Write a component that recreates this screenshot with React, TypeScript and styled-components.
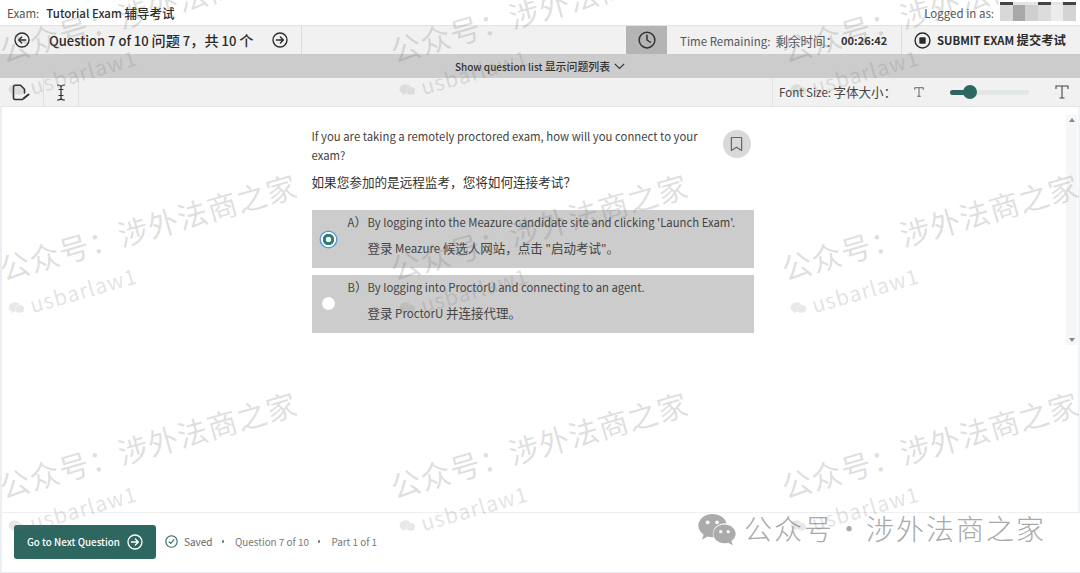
import React from 'react'
import styled, { createGlobalStyle } from 'styled-components'

const FONT = `"Noto Sans CJK SC", "Noto Sans", sans-serif`

const GlobalStyle = createGlobalStyle`
  html, body {
    margin: 0;
    padding: 0;
    background: #fff;
    font-family: ${FONT};
  }
  * { box-sizing: border-box; }
`

const WeChat = ({ size, color, eyes }: { size: number; color: string; eyes?: boolean }) => (
  <svg width={size} height={size * 0.84} viewBox="0 0 42 36">
    <path
      fill={color}
      d="M16 1C7.700 1 1 6.600 1 13.500c0 4 2.200 7.400 5.700 9.700L5 28.500l6.200-3.200c1.500.4 3 .7 4.800.7h1.200c-.5-1.200-.7-2.400-.7-3.700 0-6.400 6.100-11.300 13.600-11.300h1.100C29.800 5.100 23.500 1 16 1z"
    />
    <path
      fill={color}
      d="M41 22.300c0-5.600-5.500-10.100-12-10.100s-12 4.500-12 10.100 5.500 10.100 12 10.100c1.300 0 2.700-.2 3.900-.6l4.900 2.700-1.300-4.400c2.700-1.900 4.500-4.700 4.500-7.800z"
    />
    {eyes && (
      <>
        <circle cx="11" cy="10" r="2" fill="#fff" />
        <circle cx="21" cy="10" r="2" fill="#fff" />
        <circle cx="25" cy="20" r="1.700" fill="#fff" />
        <circle cx="33" cy="20" r="1.700" fill="#fff" />
      </>
    )}
  </svg>
)

const CircleArrow = ({ dir, size, color }: { dir: 'left' | 'right'; size: number; color: string }) => (
  <svg width={size} height={size} viewBox="0 0 24 24" fill="none" stroke={color} strokeWidth="2" strokeLinecap="round" strokeLinejoin="round">
    <circle cx="12" cy="12" r="10.500" />
    {dir === 'left' ? <path d="M17.500 12h-10M11.500 7.500 7 12l4.500 4.500" /> : <path d="M6.500 12h10M12.500 7.500 17 12l-4.500 4.500" />}
  </svg>
)

const SlabT = ({ w, h }: { w: number; h: number }) => (
  <svg width={w} height={h} viewBox="0 0 14 14" fill="none" stroke="#444" strokeWidth="1.100">
    <path d="M1 4V1h12v3M7 1v12M4.500 13h5" />
  </svg>
)

const App = () => (
  <Page>
    <GlobalStyle />
    <Header>
      <ExamLabel>
        Exam:<strong>Tutorial Exam <Han>辅导考试</Han></strong>
      </ExamLabel>
      <LoggedIn>
        Logged in as:
        <Pixelated>
          {['#d8d8d8', '#a8a8a8', '#cfcfcf', '#dcdcdc', '#ececec', '#d4d4d4'].map((c, i) => (
            <Pixel key={i} color={c} mark={i === 0 || i === 3 || i === 5} />
          ))}
        </Pixelated>
      </LoggedIn>
    </Header>

    <NavBar>
      <QuestionNav>
        <CircleArrow dir="left" size={16} color="#2b2b2b" />
        <QuestionTitle>Question 7 of 10 <Han>问题</Han> 7<Han>，共</Han> 10 <Han>个</Han></QuestionTitle>
        <CircleArrow dir="right" size={16} color="#2b2b2b" />
      </QuestionNav>
      <NavSpacer />
      <ClockBox>
        <svg width="18" height="18" viewBox="0 0 24 24" fill="none" stroke="#333" strokeWidth="2" strokeLinecap="round" strokeLinejoin="round">
          <circle cx="12" cy="12" r="10.500" />
          <path d="M12 5.500V12l4.500 3" />
        </svg>
      </ClockBox>
      <TimeBox>
        <TimeLabel>Time Remaining:&nbsp; <Han>剩余时间：</Han></TimeLabel>
        <TimeValue>00:26:42</TimeValue>
      </TimeBox>
      <SubmitBox>
        <svg width="17" height="17" viewBox="0 0 24 24" fill="none">
          <circle cx="12" cy="12" r="10.500" stroke="#2b2b2b" strokeWidth="2" />
          <rect x="7.500" y="7.500" width="9" height="9" rx="1.500" fill="#2b2b2b" />
        </svg>
        <SubmitText>SUBMIT EXAM <Han>提交考试</Han></SubmitText>
      </SubmitBox>
    </NavBar>

    <ListToggle>
      <span>Show question list <Han>显示问题列表</Han></span>
      <svg width="11" height="7" viewBox="0 0 11 7" fill="none" stroke="#333" strokeWidth="1.200">
        <path d="M.8.8 5.500 5.500 10.200.8" />
      </svg>
    </ListToggle>

    <ToolBar>
      <ToolButton>
        <svg width="18" height="17" viewBox="0 0 18 17" fill="none" stroke="#333" strokeWidth="1.600" strokeLinecap="round" strokeLinejoin="round">
          <path d="M10.500 15.500H3.200Q1.500 15.500 1.500 13.800V3Q1.500 1.300 3.200 1.300H8.500L12.500 5.300V9" />
          <path d="M11.500 14.500l5-4" strokeWidth="2" />
        </svg>
      </ToolButton>
      <ToolButton>
        <svg width="10" height="17" viewBox="0 0 10 17" fill="none" stroke="#333" strokeWidth="1.200" strokeLinecap="round">
          <path d="M1.500 1C3.500 1 5 1.500 5 3v11c0 1.500 1.500 2 3.500 2M8.500 1C6.500 1 5 1.500 5 3M5 14c0 1.500-1.500 2-3.500 2M3 5.500h4M3 11.500h4" />
        </svg>
      </ToolButton>
      <FontControls>
        <FontLabel>Font Size: <Han>字体大小：</Han></FontLabel>
        <SlabT w={10} h={10} />
        <SliderTrack>
          <SliderFill />
          <SliderThumb />
        </SliderTrack>
        <SlabT w={14} h={14} />
      </FontControls>
    </ToolBar>

    <Main>
      <Scrollbar>
        <ScrollArrow up />
        <ScrollArrow />
      </Scrollbar>
      <QuestionColumn>
        <QuestionRow>
          <QuestionText>
            <QuestionEn>If you are taking a remotely proctored exam, how will you connect to your exam?</QuestionEn>
            <QuestionZh>如果您参加的是远程监考，您将如何连接考试？</QuestionZh>
          </QuestionText>
          <BookmarkButton>
            <svg width="13" height="16" viewBox="0 0 14 16" fill="none" stroke="#666" strokeWidth="1.300" strokeLinejoin="round">
              <path d="M1.500 1h11v14L7 11.500 1.500 15z" />
            </svg>
          </BookmarkButton>
        </QuestionRow>
        <Options>
          <Option>
            <Radio selected />
            <OptionLetter>A<Han>）</Han></OptionLetter>
            <OptionBody>
              <OptionEn>By logging into the Meazure candidate site and clicking 'Launch Exam'.</OptionEn>
              <OptionZh><Han>登录</Han> Meazure <Han>候选人网站，点击</Han> "<Han>启动考试</Han>"<Han>。</Han></OptionZh>
            </OptionBody>
          </Option>
          <Option>
            <Radio />
            <OptionLetter>B<Han>）</Han></OptionLetter>
            <OptionBody>
              <OptionEn>By logging into ProctorU and connecting to an agent.</OptionEn>
              <OptionZh><Han>登录</Han> ProctorU <Han>并连接代理。</Han></OptionZh>
            </OptionBody>
          </Option>
        </Options>
      </QuestionColumn>
    </Main>

    <Footer>
      <NextButton>
        Go to Next Question
        <CircleArrow dir="right" size={16} color="#fff" />
      </NextButton>
      <SavedIcon>
        <svg width="13" height="13" viewBox="0 0 24 24" fill="none" stroke="#2e6660" strokeWidth="2" strokeLinecap="round" strokeLinejoin="round">
          <circle cx="12" cy="12" r="10.500" />
          <path d="M7.500 12.500l3 3 6-7" />
        </svg>
      </SavedIcon>
      <SavedText>Saved</SavedText>
      <Dot />
      <StatusText>Question 7 of 10</StatusText>
      <Dot />
      <StatusText>Part 1 of 1</StatusText>
      <Stamp>
        <WeChat size={40} color="#ababab" eyes />
        <StampText>公众号<StampDot>·</StampDot>涉外法商之家</StampText>
      </Stamp>
    </Footer>

    <WatermarkLayer>
      {Array.from({ length: 9 }).map((_, i) => (
        <WatermarkTile key={i}>
          <WatermarkMain>公众号：涉外法商之家</WatermarkMain>
          <WatermarkSub>
            <WeChat size={16} color="rgba(110, 110, 110, 0.16)" />
            usbarlaw1
          </WatermarkSub>
        </WatermarkTile>
      ))}
    </WatermarkLayer>
  </Page>
)

export default App

const Page = styled.div`
  position: relative;
  width: 1080px;
  height: 573px;
  overflow: hidden;
  display: flex;
  flex-direction: column;
  background: #fff;
  color: #333;
`

const Han = styled.span`
  font-size: 1.09em;
`

const Header = styled.header`
  height: 25px;
  flex: none;
  display: flex;
  align-items: center;
  justify-content: space-between;
  padding: 0 0 0 7px;
`

const ExamLabel = styled.div`
  font-size: 11.500px;
  color: #555;
  strong {
    margin-left: 7px;
    font-weight: 500;
    color: #2b2b2b;
  }
`

const LoggedIn = styled.div`
  display: flex;
  align-items: center;
  font-size: 11.500px;
  color: #555;
  height: 100%;
`

const Pixelated = styled.div`
  display: flex;
  width: 76px;
  height: 19px;
  margin: 2px 4px 0 6px;
  align-self: flex-start;
`

const Pixel = styled.div<{ color: string; mark: boolean }>`
  flex: 1;
  background: ${({ color }) => color};
  border-top: 3px solid ${({ mark }) => (mark ? '#444' : '#e4e4e4')};
`

const NavBar = styled.div`
  height: 29px;
  flex: none;
  display: flex;
  background: #f1f1f1;
  border-top: 1px solid #e2e2e2;
`

const QuestionNav = styled.div`
  width: 302px;
  display: flex;
  align-items: center;
  gap: 19px;
  padding-left: 14px;
  border-right: 1px solid #dcdcdc;
`

const QuestionTitle = styled.div`
  font-size: 13px;
  font-weight: 500;
  color: #2b2b2b;
  white-space: nowrap;
  padding-bottom: 1px;
`

const NavSpacer = styled.div`
  flex: 1;
`

const ClockBox = styled.div`
  width: 41px;
  display: flex;
  align-items: center;
  justify-content: center;
  background: #b4b4b4;
`

const TimeBox = styled.div`
  width: 235px;
  display: flex;
  align-items: center;
  padding-left: 13px;
  border-right: 1px solid #dcdcdc;
`

const TimeLabel = styled.span`
  font-size: 11.500px;
  color: #555;
  white-space: nowrap;
`

const TimeValue = styled.span`
  font-size: 11px;
  font-weight: 700;
  color: #333;
  margin-left: 3px;
`

const SubmitBox = styled.div`
  width: 178px;
  display: flex;
  align-items: center;
  gap: 6px;
  padding-left: 12px;
`

const SubmitText = styled.span`
  font-size: 11.300px;
  font-weight: 700;
  color: #2b2b2b;
  white-space: nowrap;
`

const ListToggle = styled.div`
  height: 24px;
  flex: none;
  display: flex;
  align-items: center;
  justify-content: center;
  gap: 4px;
  background: #cccccc;
  font-size: 10px;
  font-weight: 500;
  color: #333;
`

const ToolBar = styled.div`
  height: 29px;
  flex: none;
  display: flex;
  background: #f1f1f1;
  border-bottom: 1px solid #e6e6e6;
`

const ToolButton = styled.div`
  width: 35px;
  display: flex;
  align-items: center;
  justify-content: center;
  border-right: 1px solid #e0e0e0;
  &:first-child {
    width: 44px;
    justify-content: flex-start;
    padding-left: 12px;
  }
`

const FontControls = styled.div`
  margin-left: auto;
  width: 308px;
  display: flex;
  align-items: center;
  padding-left: 6px;
  border-left: 1px solid #e4e4e4;
`

const FontLabel = styled.span`
  font-size: 11.500px;
  color: #444;
  width: 135px;
  white-space: nowrap;
  padding-bottom: 1px;
`

const SliderTrack = styled.div`
  position: relative;
  width: 79px;
  height: 5px;
  margin: 0 26px;
  border-radius: 3px;
  background: #e3e6e6;
`

const SliderFill = styled.div`
  width: 20px;
  height: 100%;
  border-radius: 3px;
  background: #2e6660;
`

const SliderThumb = styled.div`
  position: absolute;
  left: 13px;
  top: -4.500px;
  width: 14px;
  height: 14px;
  border-radius: 50%;
  background: #2e6660;
`

const Main = styled.main`
  flex: 1;
  min-height: 0;
  position: relative;
  display: flex;
  justify-content: center;
  padding: 20px 0 0 2px;
  border-left: 2px solid #eceef4;
  border-right: 2px solid #f2f3f7;
`

const Scrollbar = styled.div`
  position: absolute;
  top: 8px;
  right: 1px;
  width: 11px;
  height: 230px;
  background: #f6f6f6;
  display: flex;
  flex-direction: column;
  justify-content: space-between;
  align-items: center;
  padding: 3px 0;
`

const ScrollArrow = styled.div<{ up?: boolean }>`
  width: 0;
  height: 0;
  border-left: 3px solid transparent;
  border-right: 3px solid transparent;
  ${({ up }) => (up ? 'border-bottom: 4px solid #888;' : 'border-top: 4px solid #888;')}
`

const QuestionColumn = styled.div`
  width: 442px;
  margin-left: -17px;
`

const QuestionRow = styled.div`
  display: flex;
  justify-content: space-between;
  align-items: flex-start;
`

const QuestionText = styled.div`
  width: 400px;
`

const QuestionEn = styled.div`
  font-size: 11.350px;
  line-height: 19px;
  color: #444;
`

const QuestionZh = styled.div`
  font-size: 12.600px;
  line-height: 19px;
  margin-top: 7px;
  color: #333;
`

const BookmarkButton = styled.div`
  width: 28px;
  height: 28px;
  margin: 3px 3px 0 0;
  border-radius: 50%;
  background: #d9d9d9;
  display: flex;
  align-items: center;
  justify-content: center;
`

const Options = styled.div`
  display: flex;
  flex-direction: column;
  gap: 7px;
  margin-top: 19px;
`

const Option = styled.div`
  height: 58px;
  display: flex;
  align-items: flex-start;
  background: #cccccc;
`

const Radio = styled.div<{ selected?: boolean }>`
  width: 15px;
  height: 15px;
  flex: none;
  margin: 22px 0 0 9px;
  border-radius: 50%;
  ${({ selected }) =>
    selected
      ? `
    background: radial-gradient(circle, #fff 0 2.500px, #2e8075 3px 5.500px, #fff 6px);
    box-shadow: 0 0 0 1.500px #5b9bd5;
  `
      : `
    background: #fff;
    margin-top: 22px;
    width: 13px;
    height: 13px;
    margin-left: 10px;
    margin-right: 1px;
  `}
`

const OptionLetter = styled.div`
  width: 20px;
  margin: 3px 0 0 12px;
  font-size: 11.300px;
  line-height: 19px;
  color: #444;
  white-space: nowrap;
`

const OptionBody = styled.div`
  padding-top: 3px;
`

const OptionEn = styled.div`
  font-size: 11.300px;
  line-height: 19px;
  color: #444;
  white-space: nowrap;
`

const OptionZh = styled.div`
  font-size: 11.500px;
  line-height: 19px;
  margin-top: 6px;
  color: #444;
  white-space: nowrap;
`

const Footer = styled.footer`
  height: 61px;
  flex: none;
  display: flex;
  align-items: center;
  padding: 0 0 2px 12px;
  border-top: 1px solid #efefef;
  border-left: 2px solid #eceef4;
  border-bottom: 1px solid #e8e8ec;
  background: #fff;
  position: relative;
`

const NextButton = styled.div`
  width: 142px;
  height: 34px;
  display: flex;
  align-items: center;
  gap: 7px;
  padding-left: 13px;
  border-radius: 3px;
  background: #2e6660;
  color: #fff;
  font-size: 9.800px;
  font-weight: 500;
  white-space: nowrap;
`

const SavedIcon = styled.span`
  display: flex;
  margin-left: 9px;
`

const SavedText = styled.span`
  margin-left: 6px;
  font-size: 10px;
  color: #666;
`

const StatusText = styled.span`
  font-size: 9.900px;
  color: #777;
`

const Dot = styled.span`
  width: 2.500px;
  height: 2.500px;
  margin: 0 11px 0 9px;
  border-radius: 50%;
  background: #777;
`

const Stamp = styled.div`
  position: absolute;
  left: 695px;
  top: 0;
  height: 33px;
  display: flex;
  align-items: center;
  gap: 7px;
`

const StampText = styled.span`
  font-size: 28px;
  letter-spacing: 2px;
  color: #a9a9a9;
  white-space: nowrap;
  font-weight: 300;
  margin-bottom: 3px;
`

const StampDot = styled.span`
  margin: 0 1px;
`

const WatermarkLayer = styled.div`
  position: absolute;
  left: 0;
  top: -128px;
  display: grid;
  grid-template-columns: repeat(3, 391px);
  grid-auto-rows: 218px;
  pointer-events: none;
`

const WatermarkTile = styled.div`
  width: 391px;
  height: 218px;
  padding: 117px 0 0 0;
  transform: rotate(-16deg);
  transform-origin: 148px 162px;
`

const WatermarkMain = styled.div`
  font-size: 30px;
  line-height: 40px;
  letter-spacing: 0.800px;
  color: rgba(110, 110, 110, 0.22);
  white-space: nowrap;
  margin-left: 1px;
`

const WatermarkSub = styled.div`
  display: flex;
  align-items: center;
  gap: 6px;
  margin: 9px 0 0 -2px;
  font-size: 21px;
  line-height: 28px;
  letter-spacing: 1px;
  color: rgba(110, 110, 110, 0.2);
`
